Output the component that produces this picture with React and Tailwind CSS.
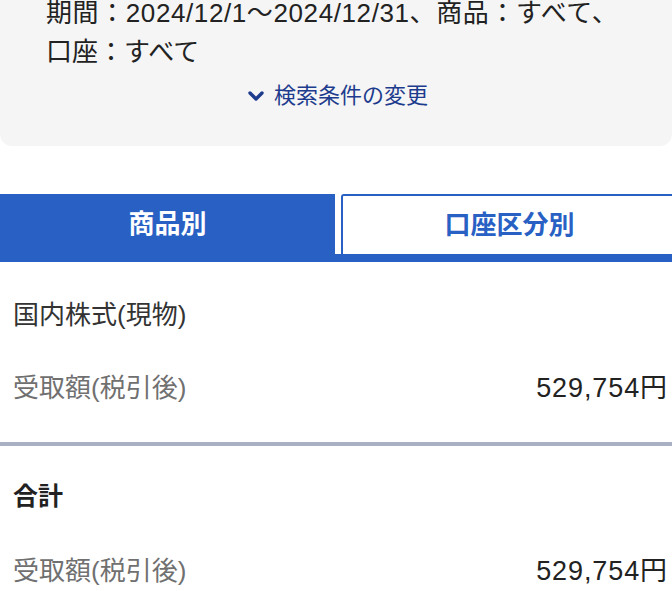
import { ChevronDown } from "lucide-react";

const font = { fontFamily: '"Liberation Sans", "Noto Sans CJK JP", sans-serif' };

function AmountRow({ label, value }) {
  return (
    <div className="flex items-center justify-between h-[74px] pl-[13px] pr-[4px]">
      <span className="text-[26px] text-[#707070]">{label}</span>
      <span className="text-[27px] tracking-[0.9px] text-[#222]">{value}</span>
    </div>
  );
}

export default function App() {
  return (
    <div className="w-[672px] h-[591px] overflow-hidden bg-white" style={font}>
      {/* search conditions */}
      <div className="bg-[#f5f5f5] rounded-b-xl h-[146px] overflow-hidden">
        <div className="-mt-[6px] pl-[46px] text-[26px] leading-[39px] text-[#222]">
          <p className="whitespace-nowrap tracking-[0.6px]">期間：2024/12/1〜2024/12/31、商品：すべて、</p>
          <p>口座：すべて</p>
        </div>
        <button className="mx-auto mt-[7px] flex items-center gap-[6px] text-[22px] text-[#1e3c8e]">
          <ChevronDown size={24} strokeWidth={3.4} />
          <span>検索条件の変更</span>
        </button>
      </div>

      {/* tabs */}
      <div className="mt-[48px]">
        <div className="flex h-[60px]">
          <div className="w-[335px] shrink-0 bg-[#2860c4] flex items-center justify-center text-white text-[26px] font-bold">
            商品別
          </div>
          <div className="ml-[6px] w-[337px] shrink-0 border-2 border-b-0 border-[#2860c4] rounded-t-[3px] flex items-center justify-center text-[#2860c4] text-[26px] font-bold">
            口座区分別
          </div>
        </div>
        <div className="h-[8px] bg-[#2860c4]" />
      </div>

      {/* product rows */}
      <div className="pt-[17px]">
        <div className="h-[72px] flex items-center pl-[13px] text-[26px] text-[#333]">
          国内株式(現物)
        </div>
        <AmountRow label="受取額(税引後)" value="529,754円" />
      </div>
      <div className="mt-[17px] h-[4px] bg-[#a9b0c3]" />

      {/* total */}
      <div className="pt-[14px]">
        <div className="h-[74px] flex items-center pl-[13px] text-[25px] font-bold text-[#222]">
          合計
        </div>
        <AmountRow label="受取額(税引後)" value="529,754円" />
      </div>
    </div>
  );
}
